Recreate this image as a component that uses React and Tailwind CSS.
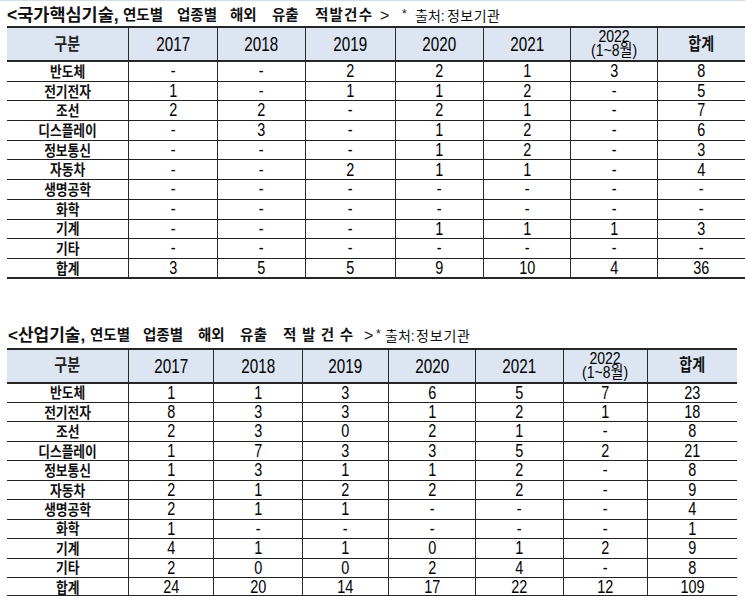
import React from "react";

const FONT = "font-['Liberation_Sans','Noto_Sans_CJK_KR',sans-serif]";

const T1 = [
  ["반도체", "-", "-", "2", "2", "1", "3", "8"],
  ["전기전자", "1", "-", "1", "1", "2", "-", "5"],
  ["조선", "2", "2", "-", "2", "1", "-", "7"],
  ["디스플레이", "-", "3", "-", "1", "2", "-", "6"],
  ["정보통신", "-", "-", "-", "1", "2", "-", "3"],
  ["자동차", "-", "-", "2", "1", "1", "-", "4"],
  ["생명공학", "-", "-", "-", "-", "-", "-", "-"],
  ["화학", "-", "-", "-", "-", "-", "-", "-"],
  ["기계", "-", "-", "-", "1", "1", "1", "3"],
  ["기타", "-", "-", "-", "-", "-", "-", "-"],
  ["합계", "3", "5", "5", "9", "10", "4", "36"],
];

const T2 = [
  ["반도체", "1", "1", "3", "6", "5", "7", "23"],
  ["전기전자", "8", "3", "3", "1", "2", "1", "18"],
  ["조선", "2", "3", "0", "2", "1", "-", "8"],
  ["디스플레이", "1", "7", "3", "3", "5", "2", "21"],
  ["정보통신", "1", "3", "1", "1", "2", "-", "8"],
  ["자동차", "2", "1", "2", "2", "2", "-", "9"],
  ["생명공학", "2", "1", "1", "-", "-", "-", "4"],
  ["화학", "1", "-", "-", "-", "-", "-", "1"],
  ["기계", "4", "1", "1", "0", "1", "2", "9"],
  ["기타", "2", "0", "0", "2", "4", "-", "8"],
  ["합계", "24", "20", "14", "17", "22", "12", "109"],
];

// [text, box class, text class]
const TITLE1 = [
  ["<국가핵심기술,", "w-[106px] ml-[7px]", "text-[17.5px] font-bold"],
  ["연도별", "w-[36px] ml-[10px]", "text-[14.5px] font-bold"],
  ["업종별", "w-[36px] ml-[18px]", "text-[14.5px] font-bold"],
  ["해외", "w-[25px] ml-[17px]", "text-[14.5px] font-bold"],
  ["유출", "w-[25px] ml-[17px]", "text-[14.5px] font-bold"],
  ["적발건수", "w-[57px] ml-[18px]", "text-[14.5px] font-bold"],
  [">", "w-[10px] ml-[8px]", "text-[16px]"],
  ["*", "w-[5px] ml-[12px] -mt-[3px]", "text-[12px]"],
  ["출처:", "w-[27px] ml-[8px]", "text-[14px]"],
  ["정보기관", "w-[53px] ml-[5px]", "text-[14px]"],
];

const TITLE2 = [
  ["<산업기술,", "w-[72px] ml-[8px]", "text-[17px] font-bold"],
  ["연도별", "w-[35px] ml-[10px]", "text-[14.5px] font-bold"],
  ["업종별", "w-[37px] ml-[18px]", "text-[14.5px] font-bold"],
  ["해외", "w-[24px] ml-[18px]", "text-[14.5px] font-bold"],
  ["유출", "w-[27px] ml-[18px]", "text-[14.5px] font-bold"],
  ["적발건수", "w-[70px] ml-[16px]", "text-[14.5px] font-bold"],
  [">", "w-[9px] ml-[11px]", "text-[16px]"],
  ["*", "w-[5px] ml-[3px] -mt-[3px]", "text-[12px]"],
  ["출처:", "w-[26px] ml-[4px]", "text-[14px]"],
  ["정보기관", "w-[54px] ml-[5px]", "text-[14px]"],
];

function Title({ parts, pad }) {
  return (
    <div className={`h-[25px] flex items-center whitespace-nowrap text-[#111] ${pad}`}>
      {parts.map(([t, box, txt], i) => {
        const chars = t.startsWith("<") ? [t] : [...t];
        return (
          <span key={i} className={`flex shrink-0 justify-between leading-none ${box} ${txt}`}>
            {chars.map((c, j) => (
              <span key={j}>{c}</span>
            ))}
          </span>
        );
      })}
    </div>
  );
}

function Cell({ children, first }) {
  return (
    <div
      className={`flex items-center justify-center overflow-visible ${
        first ? "" : "border-l border-[#2a2a2a]"
      }`}
    >
      {children}
    </div>
  );
}

function Num({ v }) {
  return (
    <span className="inline-block scale-x-[0.78] text-[18.5px] leading-none text-black">
      {v}
    </span>
  );
}

function Label({ v }) {
  return (
    <span className="inline-block scale-x-[0.85] text-[15px] font-bold leading-none whitespace-nowrap text-[#111]">
      {v}
    </span>
  );
}

function Header({ cols }) {
  return (
    <div className={`grid ${cols} h-[34px] bg-[#dce5f1] border-b-2 border-[#262626]`}>
      <Cell first>
        <span className="inline-block scale-x-[0.85] text-[16.5px] font-bold leading-none text-[#222]">구분</span>
      </Cell>
      {["2017", "2018", "2019", "2020", "2021"].map((y) => (
        <Cell key={y}>
          <span className="inline-block scale-x-[0.76] text-[20px] leading-none text-black">{y}</span>
        </Cell>
      ))}
      <Cell>
        <span className="flex flex-col items-center scale-x-[0.85] text-[16.5px] leading-[14px] text-black -mt-[2px]">
          <span>2022</span>
          <span>(1~8월)</span>
        </span>
      </Cell>
      <Cell>
        <span className="inline-block scale-x-[0.85] text-[16.5px] font-bold leading-none text-[#111]">합계</span>
      </Cell>
    </div>
  );
}

function Table({ cols, rows, rowH, width }) {
  return (
    <div className={`ml-[7px] ${width} border-t-2 border-[#262626]`}>
      <Header cols={cols} />
      {rows.map((r, ri) => (
        <div
          key={ri}
          className={`grid ${cols} ${rowH} ${
            ri === rows.length - 1 ? "border-b-2 border-[#262626]" : "border-b border-[#222]"
          }`}
        >
          {r.map((v, ci) => (
            <Cell key={ci} first={ci === 0}>
              {ci === 0 ? <Label v={v} /> : <Num v={v} />}
            </Cell>
          ))}
        </div>
      ))}
    </div>
  );
}

export default function App() {
  return (
    <div className={`w-[745px] h-[596px] overflow-hidden bg-white ${FONT}`}>
      <div className="h-px bg-[#d3dbe6]" />
      <Title parts={TITLE1} pad="h-[24px] pt-[4px]" />
      <Table
        cols="grid-cols-[121px_89px_88px_90px_88px_87px_87px_88px]"
        rows={T1}
        rowH="h-[19.7px]"
        width="w-[738px]"
      />
      <div className="mt-[44px]">
        <Title parts={TITLE2} pad="pt-[1px]" />
      </div>
      <Table
        cols="grid-cols-[121px_85px_89px_86px_87px_88px_84px_90px]"
        rows={T2}
        rowH="h-[19.45px]"
        width="w-[730px]"
      />
    </div>
  );
}
